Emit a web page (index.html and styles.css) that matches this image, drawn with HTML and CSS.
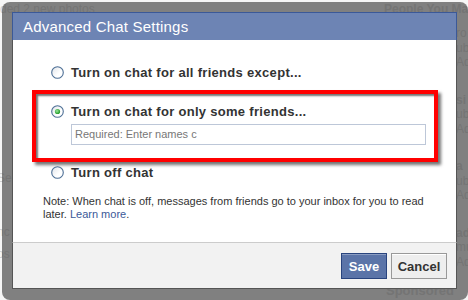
FILE: index.html
```html
<!DOCTYPE html>
<html>
<head>
<meta charset="utf-8">
<title>Advanced Chat Settings</title>
<link rel="stylesheet" href="styles.css">
</head>
<body>
<svg class="defs" width="0" height="0" aria-hidden="true">
  <defs>
    <linearGradient id="radioFill" x1="0" y1="0" x2="1" y2="1">
      <stop offset="0" stop-color="#dfe3e8"/>
      <stop offset="0.6" stop-color="#ffffff"/>
      <stop offset="1" stop-color="#ffffff"/>
    </linearGradient>
    <radialGradient id="dotFill" cx="0.4" cy="0.4" r="0.6">
      <stop offset="0" stop-color="#9be69b"/>
      <stop offset="1" stop-color="#1f9a26"/>
    </radialGradient>
  </defs>
</svg>

<div class="page">
  <div class="page-top">
    <span>ded 2 new photos</span>
    <span class="strong">People You May Know</span>
  </div>
  <div class="page-cols">
    <div class="feed">
      <span>Se</span>
      <span>nc</span>
      <span>os</span>
    </div>
    <div class="side">
      <div class="group"><span>ro</span><span>ub</span><span>Ad</span></div>
      <div class="group"><span class="strong">si</span><span>ub</span><span>Ad</span></div>
      <div class="group"><span class="strong">a</span><span>ub</span><span>Ad</span></div>
      <div class="group"><span class="strong">ad</span><span>mu</span><span>Ad</span></div>
    </div>
  </div>
  <div class="page-bottom"><span class="strong">Sponsored</span></div>
</div>

<div class="overlay">
  <div class="dialog">
    <div class="dlg-title">Advanced Chat Settings</div>
    <div class="dlg-body">
      <div class="opt">
        <svg class="radio" width="13" height="13" viewBox="0 0 13 13"><circle cx="6.5" cy="6.5" r="5.8" fill="url(#radioFill)" stroke="#4d6f95" stroke-width="1.1"/></svg>
        <span class="opt-label">Turn on chat for all friends except...</span>
      </div>
      <div class="highlight">
        <div class="opt">
          <svg class="radio" width="13" height="13" viewBox="0 0 13 13"><circle cx="6.5" cy="6.5" r="5.8" fill="url(#radioFill)" stroke="#4d6f95" stroke-width="1.1"/><circle cx="6.5" cy="6.5" r="2.6" fill="url(#dotFill)"/></svg>
          <span class="opt-label">Turn on chat for only some friends...</span>
        </div>
        <div class="names-input">Required: Enter names c</div>
      </div>
      <div class="opt opt-last">
        <svg class="radio" width="13" height="13" viewBox="0 0 13 13"><circle cx="6.5" cy="6.5" r="5.8" fill="url(#radioFill)" stroke="#4d6f95" stroke-width="1.1"/></svg>
        <span class="opt-label">Turn off chat</span>
      </div>
      <p class="note">Note: When chat is off, messages from friends go to your inbox for you to read later. <a class="link" href="#">Learn more</a>.</p>
    </div>
    <div class="dlg-footer">
      <button class="btn btn-primary">Save</button>
      <button class="btn">Cancel</button>
    </div>
  </div>
</div>
</body>
</html>
```

FILE: styles.css
```css
* { box-sizing: border-box; }

html, body {
  margin: 0;
  padding: 0;
}

body {
  width: 468px;
  height: 300px;
  overflow: hidden;
  position: relative;
  background: #f6f6f6;
  font-family: "Liberation Sans", Arial, sans-serif;
}

.defs {
  position: absolute;
  width: 0;
  height: 0;
}

/* ---------- page behind the dialog ---------- */
.page {
  height: 300px;
  color: #cfcfcf;
  font-size: 12px;
  line-height: 14px;
  white-space: nowrap;
  display: flex;
  flex-direction: column;
}

.page .strong { font-weight: bold; }

.page-top {
  display: grid;
  grid-template-columns: 384px auto;
  padding-top: 2px;
  height: 22px;
  overflow: hidden;
}

.page-cols {
  display: flex;
  justify-content: space-between;
  flex: 1;
  overflow: hidden;
}

.feed {
  display: flex;
  flex-direction: column;
  padding-top: 149px;
  gap: 40px;
  margin-left: -3px;
}

.feed span:nth-child(3) { margin-top: -32px; }

.side {
  width: 12px;
  display: flex;
  flex-direction: column;
  gap: 23px;
  padding-top: 4px;
  overflow: hidden;
}

.group {
  display: flex;
  flex-direction: column;
  line-height: 14.5px;
}

.page-bottom {
  height: 16px;
  padding-left: 386px;
  overflow: hidden;
  font-size: 13px;
}

/* ---------- overlay frame ---------- */
.overlay {
  position: absolute;
  left: 2px;
  top: 2px;
  width: 466px;
  height: 298px;
  padding: 10px;
  background: rgba(72, 72, 72, 0.68);
  border-radius: 8px;
}

.dialog {
  width: 445px;
  height: 277px;
  display: flex;
  flex-direction: column;
  background: #fff;
}

.dlg-title {
  height: 28px;
  background: #6d84b4;
  border: 1px solid #3b5998;
  border-bottom: none;
  color: #fff;
  font-size: 15px;
  letter-spacing: 0.2px;
  line-height: 27px;
  padding-left: 10px;
}

.dlg-body {
  height: 202px;
  border-left: 1px solid #555;
  border-right: 1px solid #555;
  padding: 23px 16px 0 30px;
}

.opt {
  display: flex;
  align-items: center;
  height: 18px;
}

.radio {
  flex: none;
  margin-left: 8px;
  display: block;
}

.opt-label {
  margin-left: 7px;
  font-size: 13px;
  font-weight: bold;
  letter-spacing: 0.3px;
  color: #333;
  white-space: nowrap;
}

.highlight {
  margin: 9px 0 0 -11px;
  width: 406px;
  height: 72px;
  border: 4px solid #ff0000;
  padding: 8px 8px 13px 7px;
  background: #fff;
  box-shadow: 3px 3px 3px rgba(0, 0, 0, 0.55), inset 2px 2px 2px rgba(0, 0, 0, 0.55);
}

.names-input {
  margin: 4px 0 0 28px;
  width: 355px;
  height: 21px;
  border: 1px solid #bdc7d8;
  padding-left: 3px;
  font-size: 11px;
  line-height: 19px;
  color: #777;
  white-space: nowrap;
  overflow: hidden;
}

.opt-last { margin-top: 1px; }

.note {
  margin: 14px 0 0 0;
  font-size: 11px;
  line-height: 13px;
  color: #333;
}

.link {
  color: #3b5998;
  text-decoration: none;
}

.dlg-footer {
  height: 47px;
  background: #f2f2f2;
  border-top: 1px solid #ccc;
  border-left: 1px solid #555;
  border-right: 1px solid #555;
  border-bottom: 1px solid #555;
  display: flex;
  justify-content: flex-end;
  align-items: flex-start;
  gap: 4px;
  padding: 10px 9px 0 0;
}

.btn {
  height: 26px;
  margin: 0;
  padding: 0;
  font-family: "Liberation Sans", Arial, sans-serif;
  font-size: 13px;
  font-weight: bold;
  color: #333;
  background: #eeeeee;
  border: 1px solid #999;
  box-shadow: inset 0 1px 0 #fff;
  width: 56px;
}

.btn-primary {
  width: 46px;
  color: #fff;
  background: #5b74a8;
  border-color: #29447e;
  box-shadow: inset 0 1px 0 #8a9cc2;
}
```
